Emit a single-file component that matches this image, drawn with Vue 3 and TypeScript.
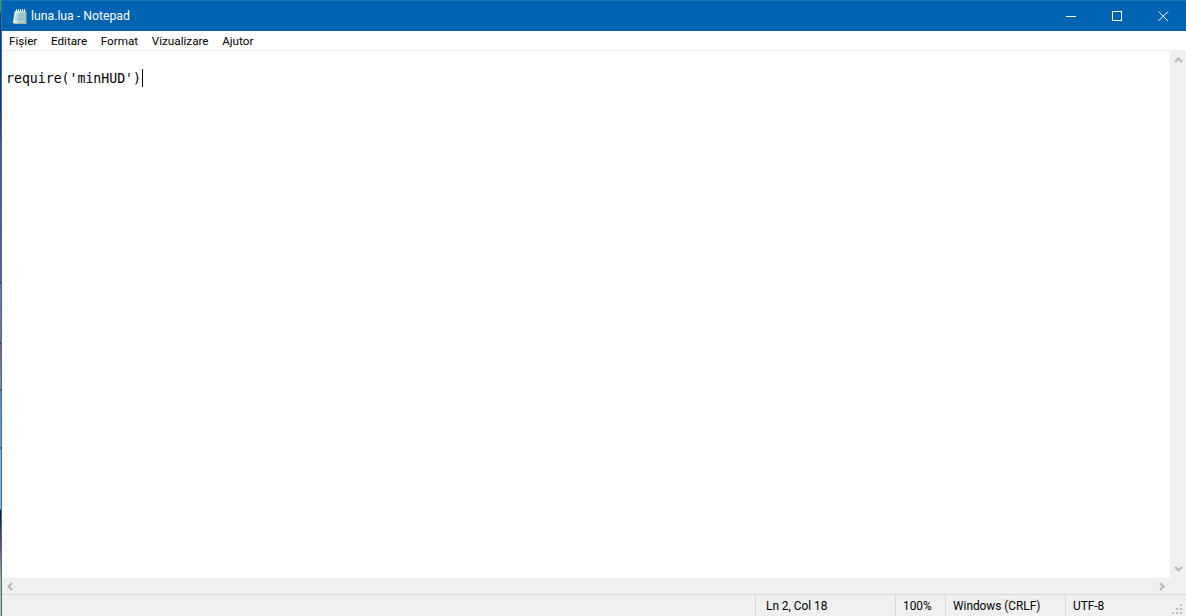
<script setup lang="ts">
const menus: string[] = ['Fișier', 'Editare', 'Format', 'Vizualizare', 'Ajutor']
</script>

<template>
  <div class="screen">
    <div class="desktop-edge"></div>
    <div class="window">
      <header class="titlebar">
        <svg class="app-icon" width="16" height="17" viewBox="0 0 16 17">
          <path d="M3.5 4 L14.5 4 L14.5 16 L1.5 16 Z" fill="#cdb98a" />
          <path d="M3 3 L13.5 3 L13.5 15 L1 15 Z" fill="#a9d3de" stroke="#7ea6b8" stroke-width=".6" />
          <path d="M3 3 L7 3 L5 15 L1 15 Z" fill="#e3f1f5" />
          <path d="M4 6H12.5M3.5 8H12.5M3.2 10H12.5M3 12H12.5" stroke="#7fa9bb" stroke-width=".7" />
          <path d="M4.5 1V4M6.5 1V4M8.5 1V4M10.5 1V4M12.5 1V4" stroke="#eef2f4" stroke-width="1" />
        </svg>
        <span class="title">luna.lua - Notepad</span>
        <div class="controls">
          <button class="control" aria-label="Minimizează">
            <svg width="12" height="12" viewBox="0 0 12 12"><path d="M1 6.5H11" stroke="#fff" /></svg>
          </button>
          <button class="control" aria-label="Maximizează">
            <svg width="12" height="12" viewBox="0 0 12 12"><rect x="1.5" y="1.5" width="9" height="9" fill="none" stroke="#fff" /></svg>
          </button>
          <button class="control" aria-label="Închide">
            <svg width="12" height="12" viewBox="0 0 12 12"><path d="M1.5 1.5L11 11M11 1.5L1.5 11" stroke="#fff" /></svg>
          </button>
        </div>
      </header>

      <nav class="menubar">
        <span v-for="m in menus" :key="m" class="menu-item">{{ m }}</span>
      </nav>

      <main class="workspace">
        <div class="editor">
          <div class="line"><span>require('minHUD')</span><i class="caret"></i></div>
        </div>
        <aside class="vscroll">
          <svg width="9" height="6" viewBox="0 0 9 6"><path d="M1 5L4.5 1.5L8 5" fill="none" stroke="#b9b9b9" stroke-width="2.2" /></svg>
          <svg width="9" height="6" viewBox="0 0 9 6"><path d="M1 1L4.5 4.5L8 1" fill="none" stroke="#b9b9b9" stroke-width="2.2" /></svg>
        </aside>
      </main>

      <div class="hscroll">
        <svg width="6" height="9" viewBox="0 0 6 9"><path d="M5 1L1.5 4.5L5 8" fill="none" stroke="#b9b9b9" stroke-width="2.2" /></svg>
        <svg width="6" height="9" viewBox="0 0 6 9"><path d="M1 1L4.5 4.5L1 8" fill="none" stroke="#b9b9b9" stroke-width="2.2" /></svg>
      </div>

      <footer class="statusbar">
        <span class="cell pos">Ln 2, Col 18</span>
        <span class="cell zoom">100%</span>
        <span class="cell eol">Windows (CRLF)</span>
        <span class="cell enc">UTF-8</span>
        <svg class="grip" width="12" height="12" viewBox="0 0 12 12" fill="#bdbdbd">
          <rect x="8" y="2" width="2" height="2" /><rect x="4" y="6" width="2" height="2" /><rect x="8" y="6" width="2" height="2" />
          <rect x="0" y="10" width="2" height="2" /><rect x="4" y="10" width="2" height="2" /><rect x="8" y="10" width="2" height="2" />
        </svg>
      </footer>
    </div>
  </div>
</template>

<style>
html, body { margin: 0; overflow: hidden; background: #fff; }
</style>

<style scoped>
.screen {
  width: 1186px;
  height: 616px;
  display: flex;
  overflow: hidden;
}
.desktop-edge {
  width: 1px;
  flex: none;
  background: linear-gradient(
    to bottom,
    #2f9a6a 0, #2f9a6a 12px, #14406f 13px, #23336d 100px,
    #5b3d78 135px, #111 136px, #6a4a80 137px, #7f4f86 282px,
    #111 283px, #8a6a88 284px, #a06a70 342px, #111 343px,
    #a05a50 344px, #9a8a80 389px, #111 390px, #6f8aa0 391px,
    #8a9ab0 447px, #111 448px, #8fb0c8 449px, #8fb0c8 509px,
    #111 510px, #8a4040 540px, #c8b060 580px, #d8c070 600px, #d8c070 616px
  );
}
.window {
  flex: 1;
  min-width: 0;
  display: flex;
  flex-direction: column;
  box-sizing: border-box;
  border-left: 1px solid #2a6fb2;
  font-family: Roboto, "Noto Sans", sans-serif;
  color: #000;
}
.titlebar {
  height: 31px;
  flex: none;
  background: #0063b1;
  display: flex;
  align-items: center;
  padding-left: 10px;
  color: #fff;
  box-sizing: border-box;
  border-top: 1px solid #1a74bb;
}
.app-icon { flex: none; margin-right: 3px; }
.title { font-size: 12.25px; }
.controls { margin-left: auto; display: flex; height: 100%; }
.control {
  width: 46px;
  border: 0;
  padding: 0;
  background: transparent;
  display: flex;
  align-items: center;
  justify-content: center;
}
.menubar {
  height: 19px;
  flex: none;
  background: #fff;
  display: flex;
  align-items: center;
  font-size: 11.7px;
  box-sizing: border-box;
}
.menu-item { padding: 0 7px; margin-right: -0.4px; }
.workspace {
  flex: 1;
  min-height: 0;
  display: flex;
  border-top: 1px solid #f0f0f0;
}
.editor { flex: 1; background: #fff; padding: 19px 0 0 4px; box-sizing: border-box; }
.line {
  display: flex;
  align-items: center;
  height: 16px;
  font-family: "DejaVu Sans Mono", "Liberation Mono", monospace;
  font-size: 13.2px;
  white-space: pre;
}
.caret { width: 1px; height: 18px; background: #000; margin-left: 1px; }
.vscroll {
  width: 16px;
  flex: none;
  background: #f0f0f0;
  display: flex;
  flex-direction: column;
  align-items: center;
  justify-content: space-between;
  padding: 6px 0;
  box-sizing: border-box;
}
.hscroll {
  height: 16px;
  flex: none;
  background: #f0f0f0;
  display: flex;
  align-items: center;
  justify-content: space-between;
  padding: 0 21px 0 5px;
}
.statusbar {
  height: 22px;
  flex: none;
  box-sizing: border-box;
  background: #f0f0f0;
  border-top: 1px solid #d7d7d7;
  display: flex;
  align-items: center;
  justify-content: flex-end;
  font-size: 11.85px;
  position: relative;
}
.cell {
  height: 100%;
  display: flex;
  align-items: center;
  border-left: 1px solid #d7d7d7;
  box-sizing: border-box;
  padding-left: 7px;
}
.pos { width: 140px; padding-left: 10px; }
.zoom { width: 50px; }
.eol { width: 120px; }
.enc { width: 121px; }
.grip { position: absolute; right: 2px; bottom: 2px; }
</style>
